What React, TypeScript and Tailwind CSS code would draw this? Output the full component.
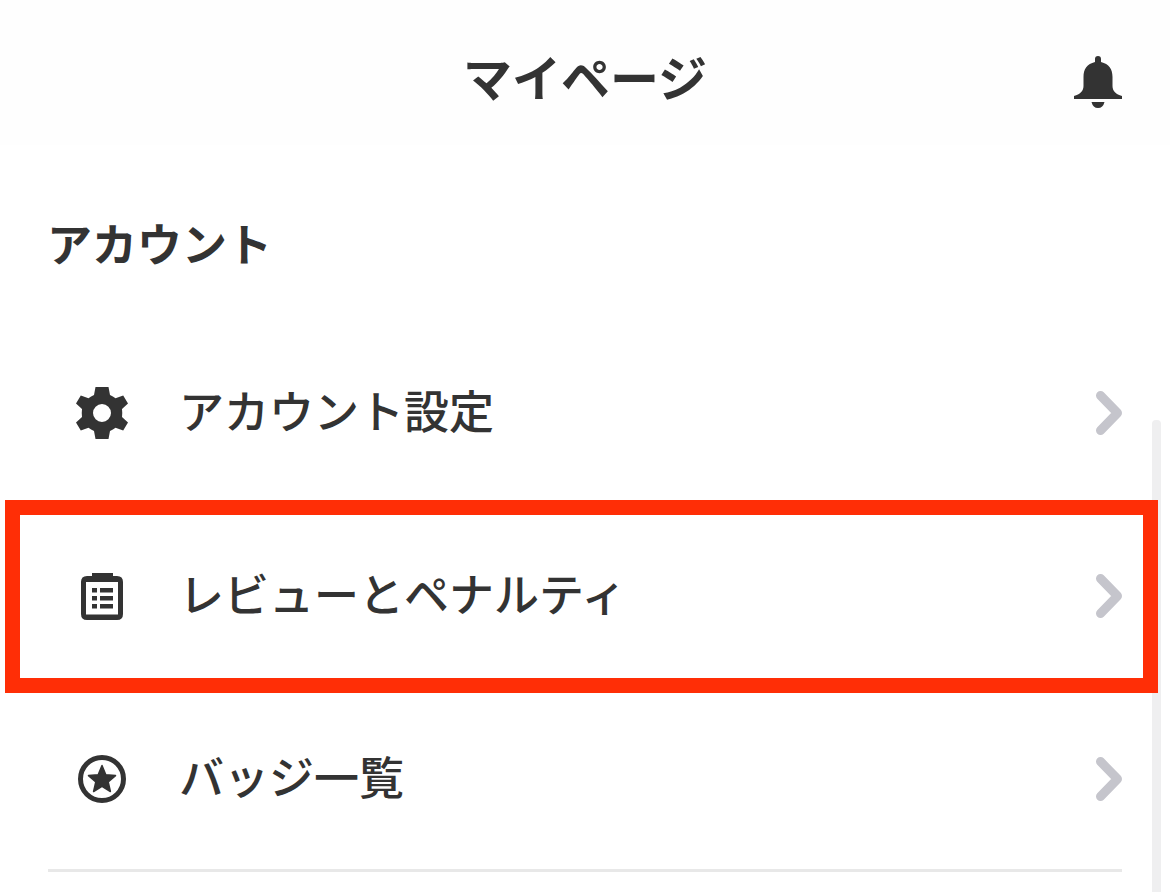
import React from "react";

const font = { fontFamily: '"Noto Sans CJK JP", "Noto Sans", sans-serif' };

function Chevron() {
  return (
    <svg width="28" height="46" viewBox="0 0 28 46" className="shrink-0">
      <path d="M5.5 5.5 L22.5 23 L5.5 40.5" fill="none" stroke="#c5c5cc" strokeWidth="9" strokeLinecap="round" strokeLinejoin="round" />
    </svg>
  );
}

function Gear() {
  return (
    <svg width="54" height="54" viewBox="0 0 54 54">
      <path
        fillRule="evenodd"
        fill="#333333"
        d="M20.5 1 H33.5 L35 9 Q38 10.2 40.5 12.2 L48.2 9.5 L53 17.5 L47 23 Q47.5 27 47 31 L53 36.5 L48.2 44.5 L40.5 41.8 Q38 43.8 35 45 L33.5 53 H20.5 L19 45 Q16 43.8 13.5 41.8 L5.8 44.5 L1 36.5 L7 31 Q6.5 27 7 23 L1 17.5 L5.8 9.5 L13.5 12.2 Q16 10.2 19 9 Z M27 18 A9 9 0 1 0 27 36 A9 9 0 1 0 27 18 Z"
      />
    </svg>
  );
}

function Clipboard() {
  return (
    <svg width="44" height="48" viewBox="0 0 44 48">
      <path
        fillRule="evenodd"
        fill="#333333"
        d="M12 1 H33 V4 H37 Q43 4 43 10 V42 Q43 48 37 48 H7 Q1 48 1 42 V10 Q1 4 7 4 H12 Z M6 10 V42.5 H38 V10 Z"
      />
      <g fill="#333333">
        <rect x="12" y="16" width="5" height="4.5" />
        <rect x="20" y="16" width="13" height="4.5" />
        <rect x="12" y="24" width="5" height="4.5" />
        <rect x="20" y="24" width="13" height="4.5" />
        <rect x="12" y="32" width="5" height="4.5" />
        <rect x="20" y="32" width="13" height="4.5" />
      </g>
    </svg>
  );
}

function StarCircle() {
  return (
    <svg width="50" height="50" viewBox="0 0 50 50">
      <circle cx="25" cy="25" r="21.5" fill="none" stroke="#333333" strokeWidth="5" />
      <path
        d="M25 11.5 L28.8 20.8 L38.5 21.6 L31.2 28 L33.4 37.5 L25 32.4 L16.6 37.5 L18.8 28 L11.5 21.6 L21.2 20.8 Z"
        fill="#333333"
        stroke="#333333"
        strokeWidth="1.5"
        strokeLinejoin="round"
      />
    </svg>
  );
}

function Bell() {
  return (
    <svg width="50" height="54" viewBox="0 0 50 54">
      <path
        fill="#333333"
        d="M25 1 Q28 1 28 4 V7 C36 9 39.5 14 39.5 22 V31 C39.5 36 43 39.5 49 41 V44 H1 V41 C7 39.5 10.5 36 10.5 31 V22 C10.5 14 14 9 22 7 V4 Q22 1 25 1 Z M18.5 47 H31.5 Q30 53 25 53 Q20 53 18.5 47 Z"
      />
    </svg>
  );
}

function Row({ icon, label }: { icon: React.ReactNode; label: string }) {
  return (
    <div className="flex h-[183px] items-center pl-[49px] pr-[47px]">
      <div className="w-[130px] shrink-0">{icon}</div>
      <span className="flex-1 pb-[6px] text-[45px] font-medium leading-none text-[#333333]">{label}</span>
      <Chevron />
    </div>
  );
}

export default function App() {
  return (
    <div className="relative h-[892px] w-[1170px] overflow-hidden bg-white" style={font}>
      <header className="relative flex h-[145px] items-center justify-center bg-[#fefefe]">
        <h1 className="pt-[6px] text-[49px] font-bold leading-none text-[#333333]">マイページ</h1>
        <div className="absolute right-[47px] top-[55px]">
          <Bell />
        </div>
      </header>
      <div className="flex h-[176px] items-start pl-[47px] pt-[75px]">
        <h2 className="text-[45px] font-bold leading-none text-[#333333]">アカウント</h2>
      </div>
      <Row icon={<div className="pl-[26px]"><Gear /></div>} label="アカウント設定" />
      <Row icon={<div className="pl-[31px]"><Clipboard /></div>} label="レビューとペナルティ" />
      <Row icon={<div className="pl-[28px]"><StarCircle /></div>} label="バッジ一覧" />
      <div className="mx-[48px] -mt-[1px] h-[3px] w-[1074px] bg-[#e8e8e8]" />

      <div className="absolute left-[1152px] top-[420px] h-[472px] w-[9px] rounded-t-sm bg-[#efeff0]" />
      <div className="absolute left-[5px] top-[500px] h-[193px] w-[1153px] border-[15px] border-[#ff2e06]" />
    </div>
  );
}
